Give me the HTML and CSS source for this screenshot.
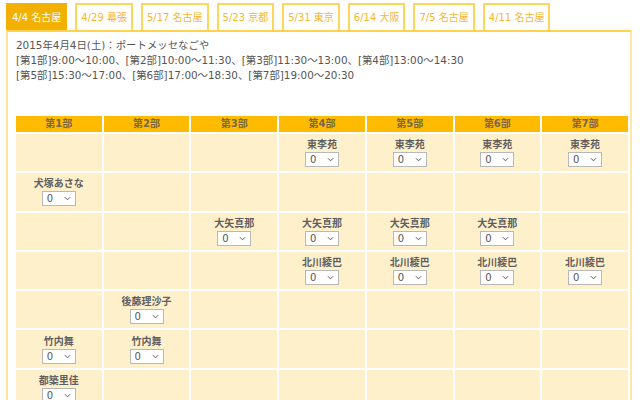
FILE: index.html
```html
<!DOCTYPE html>
<html lang="ja">
<head>
<meta charset="utf-8">
<link rel="stylesheet" href="styles.css">
</head>
<body>
<div class="page">
  <nav class="tabs">
    <a class="tab active">4/4 名古屋</a>
    <a class="tab">4/29 幕張</a>
    <a class="tab">5/17 名古屋</a>
    <a class="tab">5/23 京都</a>
    <a class="tab">5/31 東京</a>
    <a class="tab">6/14 大阪</a>
    <a class="tab">7/5 名古屋</a>
    <a class="tab">4/11 名古屋</a>
  </nav>
  <div class="panel">
    <p class="info">2015年4月4日(土)：ポートメッセなごや<br>[第1部]9:00～10:00、[第2部]10:00～11:30、[第3部]11:30～13:00、[第4部]13:00～14:30<br>[第5部]15:30～17:00、[第6部]17:00～18:30、[第7部]19:00～20:30</p>
    <table class="grid">
      <thead>
        <tr><th>第1部</th><th>第2部</th><th>第3部</th><th>第4部</th><th>第5部</th><th>第6部</th><th>第7部</th></tr>
      </thead>
      <tbody>
        <tr>
          <td></td><td></td><td></td>
          <td><div class="name">東李苑</div><span class="sel"><select><option>0</option></select><svg viewBox="0 0 8 5"><path d="M1 1l3 3 3-3"/></svg></span></td>
          <td><div class="name">東李苑</div><span class="sel"><select><option>0</option></select><svg viewBox="0 0 8 5"><path d="M1 1l3 3 3-3"/></svg></span></td>
          <td><div class="name">東李苑</div><span class="sel"><select><option>0</option></select><svg viewBox="0 0 8 5"><path d="M1 1l3 3 3-3"/></svg></span></td>
          <td><div class="name">東李苑</div><span class="sel"><select><option>0</option></select><svg viewBox="0 0 8 5"><path d="M1 1l3 3 3-3"/></svg></span></td>
        </tr>
        <tr>
          <td><div class="name">犬塚あさな</div><span class="sel"><select><option>0</option></select><svg viewBox="0 0 8 5"><path d="M1 1l3 3 3-3"/></svg></span></td>
          <td></td><td></td><td></td><td></td><td></td><td></td>
        </tr>
        <tr>
          <td></td><td></td>
          <td><div class="name">大矢真那</div><span class="sel"><select><option>0</option></select><svg viewBox="0 0 8 5"><path d="M1 1l3 3 3-3"/></svg></span></td>
          <td><div class="name">大矢真那</div><span class="sel"><select><option>0</option></select><svg viewBox="0 0 8 5"><path d="M1 1l3 3 3-3"/></svg></span></td>
          <td><div class="name">大矢真那</div><span class="sel"><select><option>0</option></select><svg viewBox="0 0 8 5"><path d="M1 1l3 3 3-3"/></svg></span></td>
          <td><div class="name">大矢真那</div><span class="sel"><select><option>0</option></select><svg viewBox="0 0 8 5"><path d="M1 1l3 3 3-3"/></svg></span></td>
          <td></td>
        </tr>
        <tr>
          <td></td><td></td><td></td>
          <td><div class="name">北川綾巴</div><span class="sel"><select><option>0</option></select><svg viewBox="0 0 8 5"><path d="M1 1l3 3 3-3"/></svg></span></td>
          <td><div class="name">北川綾巴</div><span class="sel"><select><option>0</option></select><svg viewBox="0 0 8 5"><path d="M1 1l3 3 3-3"/></svg></span></td>
          <td><div class="name">北川綾巴</div><span class="sel"><select><option>0</option></select><svg viewBox="0 0 8 5"><path d="M1 1l3 3 3-3"/></svg></span></td>
          <td><div class="name">北川綾巴</div><span class="sel"><select><option>0</option></select><svg viewBox="0 0 8 5"><path d="M1 1l3 3 3-3"/></svg></span></td>
        </tr>
        <tr>
          <td></td>
          <td><div class="name">後藤理沙子</div><span class="sel"><select><option>0</option></select><svg viewBox="0 0 8 5"><path d="M1 1l3 3 3-3"/></svg></span></td>
          <td></td><td></td><td></td><td></td><td></td>
        </tr>
        <tr>
          <td><div class="name">竹内舞</div><span class="sel"><select><option>0</option></select><svg viewBox="0 0 8 5"><path d="M1 1l3 3 3-3"/></svg></span></td>
          <td><div class="name">竹内舞</div><span class="sel"><select><option>0</option></select><svg viewBox="0 0 8 5"><path d="M1 1l3 3 3-3"/></svg></span></td>
          <td></td><td></td><td></td><td></td><td></td>
        </tr>
        <tr>
          <td><div class="name">都築里佳</div><span class="sel"><select><option>0</option></select><svg viewBox="0 0 8 5"><path d="M1 1l3 3 3-3"/></svg></span></td>
          <td></td><td></td><td></td><td></td><td></td><td></td>
        </tr>
      </tbody>
    </table>
  </div>
</div>
</body>
</html>
```
FILE: styles.css
```css
html, body {
  margin: 0;
  padding: 0;
  background: #fff;
}
body {
  font-family: "DejaVu Sans", "Noto Sans CJK JP", sans-serif;
  color: #555;
}
.page {
  padding: 3px 8px 0 6px;
}
.tabs {
  display: flex;
  gap: 8px;
  height: 27px;
}
.tab {
  display: block;
  box-sizing: border-box;
  height: 27px;
  padding: 0 4px;
  border: 2px solid #ffd65c;
  border-bottom: none;
  color: #f7b62e;
  font-size: 10px;
  line-height: 25px;
  white-space: nowrap;
  background: #fff;
}
.tab.active {
  background: #f2b100;
  border-color: #f2b100;
  color: #fff;
}
.panel {
  border: 2px solid #ffe39a;
  border-top-color: #ffd24d;
  border-right-color: #ffe7a8;
  padding: 6px 0 0 6px;
  height: 400px;
}
.info {
  margin: 0 0 0 2px;
  font-size: 10.4px;
  line-height: 15px;
  color: #555;
  height: 76px;
}
.grid {
  width: 100%;
  border-collapse: separate;
  border-spacing: 2px;
  table-layout: fixed;
}
.grid th {
  background: #ffbb00;
  color: #7a6840;
  font-size: 10px;
  font-weight: bold;
  height: 16px;
  padding: 0;
  line-height: 16px;
}
.grid td {
  background: #fff0cc;
  height: 37.3px;
  padding: 0;
  text-align: center;
  vertical-align: middle;
}
.name {
  font-size: 10px;
  font-weight: bold;
  color: #5f5f5f;
  line-height: 14px;
}
.sel {
  position: relative;
  display: block;
  width: 34px;
  height: 15px;
  margin: 0 auto;
}
.sel select {
  appearance: none;
  -webkit-appearance: none;
  display: block;
  box-sizing: border-box;
  width: 34px;
  height: 15px;
  margin: 0;
  padding: 0 0 0 4px;
  border: 1px solid #b8b8b8;
  border-radius: 0;
  background: #fff;
  font-family: "DejaVu Sans", sans-serif;
  font-size: 10px;
  line-height: 13px;
  color: #555;
}
.sel svg {
  position: absolute;
  right: 5px;
  top: 5px;
  width: 7px;
  height: 5px;
  fill: none;
  stroke: #555;
  stroke-width: 1.1;
  pointer-events: none;
}
```
